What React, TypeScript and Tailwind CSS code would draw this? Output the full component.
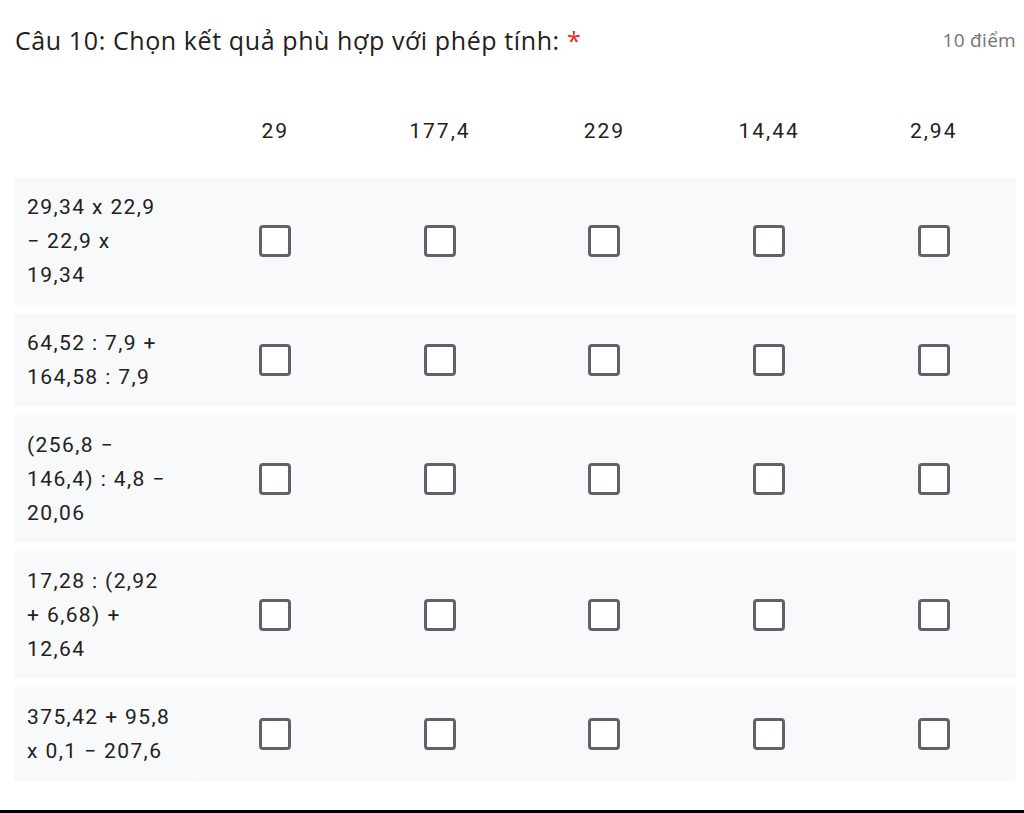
import React from "react";

const cols = ["29", "177,4", "229", "14,44", "2,94"];
const rows: string[][] = [
  ["29,34 x 22,9", "− 22,9 x", "19,34"],
  ["64,52 : 7,9 +", "164,58 : 7,9"],
  ["(256,8 −", "146,4) : 4,8 −", "20,06"],
  ["17,28 : (2,92", "+ 6,68) +", "12,64"],
  ["375,42 + 95,8", "x 0,1 − 207,6"],
];

function Box() {
  return <div className="w-[32px] h-[32px] rounded-[4px] border-[3px] border-[#5f6368] bg-white" />;
}

export default function App() {
  return (
    <div className="w-[1024px] h-[813px] bg-white flex flex-col text-[#202124]" style={{ fontFamily: "Roboto, 'Noto Sans', sans-serif" }}>
      <div className="flex items-start justify-between pl-[15px] pr-[8px] pt-[22px]">
        <div className="text-[25px] leading-[36px] tracking-[0.6px]" style={{ fontFamily: "'Open Sans', sans-serif" }}>
          Câu 10: Chọn kết quả phù hợp với phép tính: <span className="text-[#d93025]">*</span>
        </div>
        <div className="text-[19px] leading-[36px] text-[#70757a] tracking-[0.3px]" style={{ fontFamily: "'Open Sans', sans-serif" }}>10 điểm</div>
      </div>
      <div className="pl-[14px] pr-[8px] mt-[56px] flex flex-col">
        <div className="flex h-[36px] items-center">
          <div className="w-[179px]" />
          {cols.map((c) => (
            <div key={c} className="flex-1 text-center text-[21px] tracking-[2px]">{c}</div>
          ))}
        </div>
        <div className="flex flex-col gap-[8px] mt-[27px]">
          {rows.map((r, i) => (
            <div key={i} className="flex bg-[#f8f9fa] rounded-[2px]">
              <div className="w-[179px] pl-[13px] py-[13px] text-[21px] leading-[34px] tracking-[1.4px] border-r border-[#fafbfc]">
                {r.map((l, j) => (
                  <div key={j} className="whitespace-nowrap">{l}</div>
                ))}
              </div>
              {cols.map((c) => (
                <div key={c} className="flex-1 flex items-center justify-center">
                  <Box />
                </div>
              ))}
            </div>
          ))}
        </div>
      </div>
      <div className="flex-1" />
      <div className="h-[3px] bg-black" />
    </div>
  );
}
